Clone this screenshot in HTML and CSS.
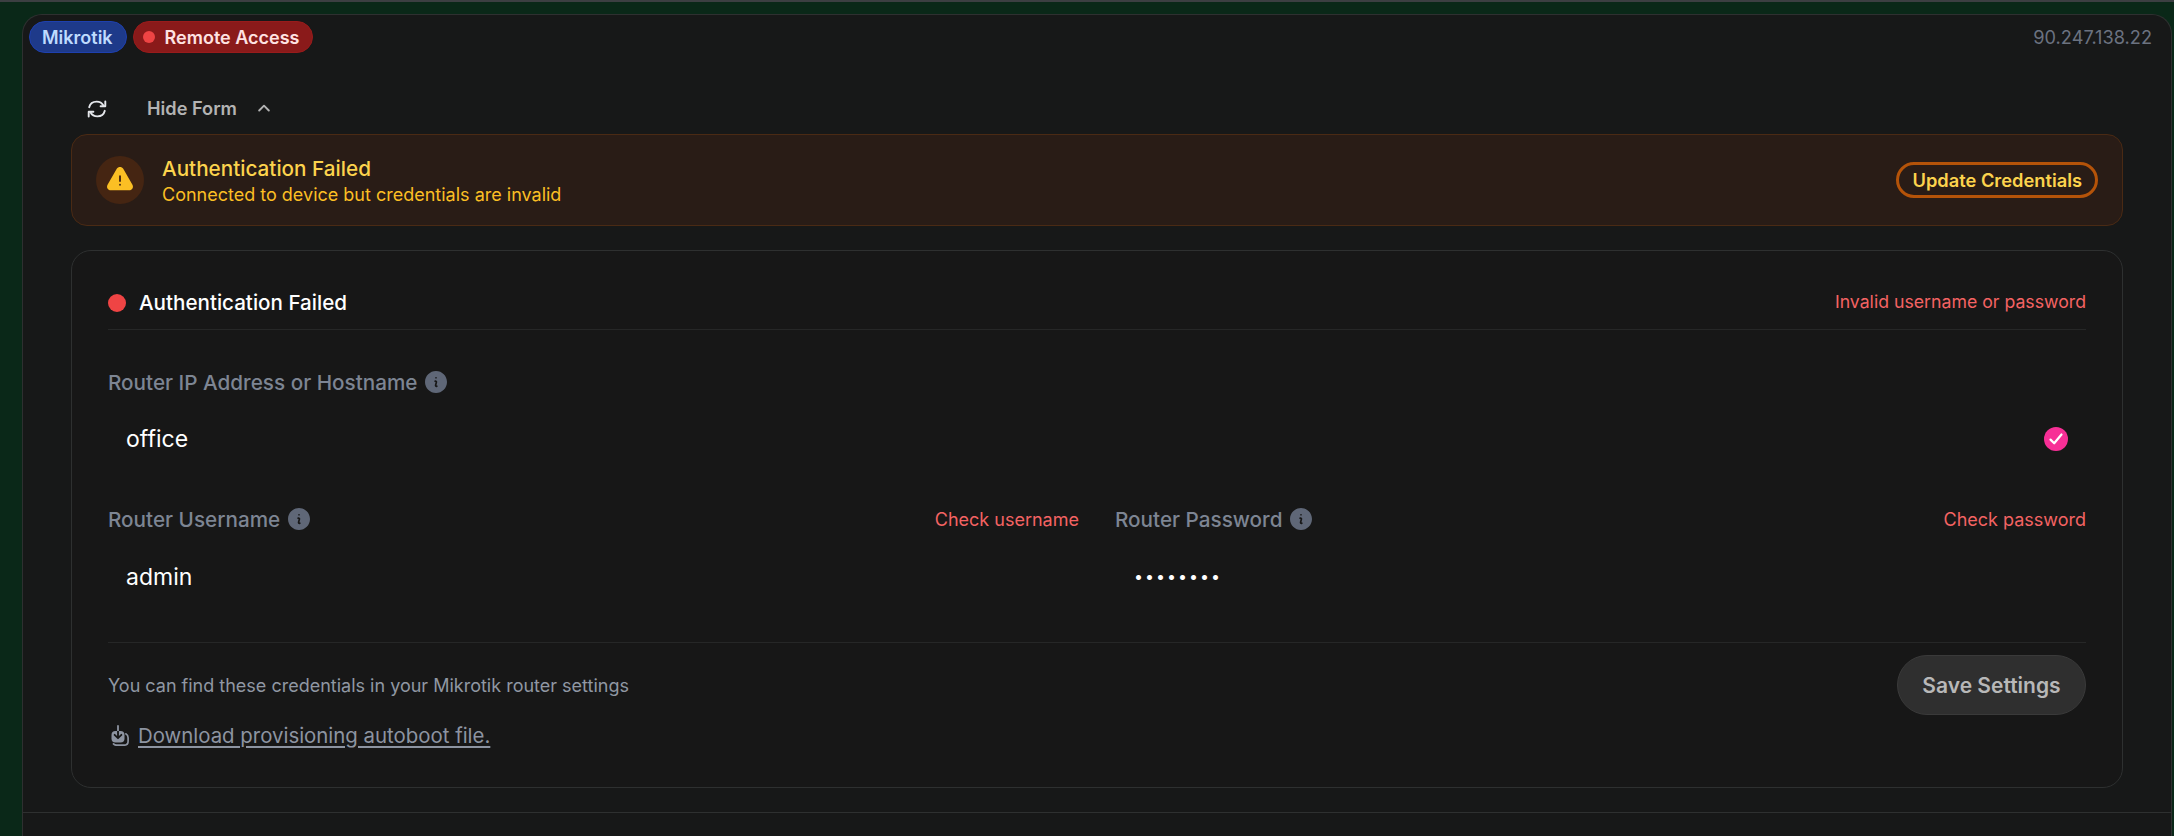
FILE: index.html
```html
<!DOCTYPE html>
<html lang="en">
<head>
<meta charset="utf-8">
<title>Mikrotik</title>
<link rel="stylesheet" href="styles.css">
</head>
<body>
<div class="page">
  <main class="panel">
    <section class="section">
      <header class="panel-head">
        <div class="badges">
          <span class="badge badge-blue">Mikrotik</span>
          <span class="badge badge-red"><i class="badge-dot"></i>Remote Access</span>
        </div>
        <span class="ip">90.247.138.22</span>
      </header>
      <div class="content">
        <div class="toolbar">
          <svg class="refresh" viewBox="0 0 20 18" fill="none" stroke="currentColor" stroke-width="1.9" stroke-linecap="round" stroke-linejoin="round"><path d="M2.2 7.2C3 4 6 1.6 9.6 1.6c3 0 5.500 1.500 6.800 3.900"/><path d="M17.800 10.800C17 14 14 16.400 10.400 16.400c-3 0-5.500-1.500-6.800-3.900"/><path d="M18.300 1.500v4.700h-4.700" /><path d="M1.700 16.500v-4.700h4.700"/></svg>
          <span class="toggle">Hide Form</span>
          <svg class="chevron" viewBox="0 0 12 8" fill="none" stroke="currentColor" stroke-width="1.900" stroke-linecap="round" stroke-linejoin="round"><path d="M1.200 6.500 6 1.700l4.800 4.800"/></svg>
        </div>

        <div class="alert">
          <div class="alert-icon">
            <svg viewBox="0 0 24 24" fill="currentColor"><path fill-rule="evenodd" clip-rule="evenodd" d="M9.401 3.003c1.155-2 4.043-2 5.197 0l7.355 12.748c1.154 2-.29 4.5-2.599 4.5H4.645c-2.309 0-3.752-2.5-2.598-4.5L9.4 3.003zM12 8.250a.75.75 0 01.75.75v3.750a.75.75 0 01-1.500 0V9A.75.75 0 0112 8.250zm0 8.250a.75.75 0 100-1.500.75.75 0 000 1.500z"/></svg>
          </div>
          <div class="alert-text">
            <div class="alert-title">Authentication Failed</div>
            <div class="alert-sub">Connected to device but credentials are invalid</div>
          </div>
          <button class="alert-btn">Update Credentials</button>
        </div>

        <div class="card">
          <div class="card-head">
            <div class="status"><i class="status-dot"></i><span>Authentication Failed</span></div>
            <span class="err err-head">Invalid username or password</span>
          </div>

          <div class="label-row first">
            <label class="label">Router IP Address or Hostname
              <svg class="info" viewBox="2.250 2.250 19.500 19.500" fill="currentColor"><path fill-rule="evenodd" clip-rule="evenodd" d="M2.250 12c0-5.385 4.365-9.750 9.750-9.750s9.750 4.365 9.750 9.750-4.365 9.750-9.750 9.750S2.250 17.385 2.250 12zm8.706-1.442c1.146-.573 2.437.463 2.126 1.706l-.709 2.836.042-.02a.75.75 0 01.67 1.34l-.04.022c-1.147.573-2.438-.463-2.127-1.706l.71-2.836-.042.02a.75.75 0 11-.671-1.34l.041-.022zM12 9a.75.75 0 100-1.500.75.75 0 000 1.500z"/></svg>
            </label>
          </div>
          <div class="value-row">
            <span class="value">office</span>
            <svg class="check" viewBox="0 0 24 24"><circle cx="12" cy="12" r="12" fill="#f72f96"/><path d="M6.500 12.600l3.700 3.700 7.300-8.800" fill="none" stroke="#fff" stroke-width="2.200" stroke-linecap="round" stroke-linejoin="round"/></svg>
          </div>

          <div class="columns">
            <div class="column">
              <div class="label-row">
                <label class="label">Router Username
                  <svg class="info" viewBox="2.250 2.250 19.500 19.500" fill="currentColor"><path fill-rule="evenodd" clip-rule="evenodd" d="M2.250 12c0-5.385 4.365-9.750 9.750-9.750s9.750 4.365 9.750 9.750-4.365 9.750-9.750 9.750S2.250 17.385 2.250 12zm8.706-1.442c1.146-.573 2.437.463 2.126 1.706l-.709 2.836.042-.02a.75.75 0 01.67 1.34l-.04.022c-1.147.573-2.438-.463-2.127-1.706l.71-2.836-.042.02a.75.75 0 11-.671-1.34l.041-.022zM12 9a.75.75 0 100-1.500.75.75 0 000 1.500z"/></svg>
                </label>
                <span class="err">Check username</span>
              </div>
              <div class="value-row second"><span class="value">admin</span></div>
            </div>
            <div class="column">
              <div class="label-row">
                <label class="label">Router Password
                  <svg class="info" viewBox="2.250 2.250 19.500 19.500" fill="currentColor"><path fill-rule="evenodd" clip-rule="evenodd" d="M2.250 12c0-5.385 4.365-9.750 9.750-9.750s9.750 4.365 9.750 9.750-4.365 9.750-9.750 9.750S2.250 17.385 2.250 12zm8.706-1.442c1.146-.573 2.437.463 2.126 1.706l-.709 2.836.042-.02a.75.75 0 01.67 1.34l-.04.022c-1.147.573-2.438-.463-2.127-1.706l.71-2.836-.042.02a.75.75 0 11-.671-1.34l.041-.022zM12 9a.75.75 0 100-1.500.75.75 0 000 1.500z"/></svg>
                </label>
                <span class="err">Check password</span>
              </div>
              <div class="value-row second"><span class="value dots">••••••••</span></div>
            </div>
          </div>

          <div class="card-foot">
            <div class="foot-row">
              <span class="hint">You can find these credentials in your Mikrotik router settings</span>
              <button class="save">Save Settings</button>
            </div>
            <div class="download">
              <svg class="dl-icon" viewBox="0 0 19 21" fill="none"><path d="M15.800 8.800c1.500.8 2.300 2.100 2.300 3.900v3.500c0 2.700-2 4-4.200 4H6.500c-1.300 0-2.300-.5-3-1.300" stroke="currentColor" stroke-width="1.700" stroke-linecap="round"/><rect x="1.500" y="6" width="13" height="11.500" rx="4" fill="currentColor"/><path d="M8 1v5" stroke="currentColor" stroke-width="1.800" stroke-linecap="round"/><path d="M8 6v7" stroke="#171717" stroke-width="1.800"/><path d="M4.600 9.800 8 13.200l3.400-3.400" stroke="#171717" stroke-width="1.800" stroke-linecap="round" stroke-linejoin="round"/></svg>
              <a class="dl-link" href="#">Download provisioning autoboot file.</a>
            </div>
          </div>
        </div>
      </div>
    </section>
  </main>
</div>
</body>
</html>
```

FILE: styles.css
```css
* { box-sizing: border-box; }
html, body { margin: 0; padding: 0; height: 100%; }
body { background: #0a2818; font-family: Inter, "Liberation Sans", sans-serif; overflow: hidden; }
.page { height: 836px; overflow: hidden; border-top: 2px solid #3c3f42; padding: 12px 2px 0 22px; }
.panel { height: 900px; background: #171818; border: 1px solid #2e3030; border-bottom: 0; border-radius: 20px 20px 0 0; }
.section { border-bottom: 1px solid #2e3030; padding-bottom: 24px; }

.panel-head { display: flex; justify-content: space-between; align-items: center; padding: 6px 19px 0 6px; height: 38px; }
.badges { display: flex; gap: 6px; }
.badge { display: inline-flex; align-items: center; height: 32px; border-radius: 16px; font-size: 18px; font-weight: 600; padding: 0 13px 0 12px; border: 1px solid transparent; }
.badge-blue { background: #1e3a8a; border-color: #1e40af; color: #bfdbfe; }
.badge-red { background: #8a1a1a; border-color: #991b1b; color: #fee2e2; padding: 0 12px 0 9px; }
.badge-dot { width: 12px; height: 12px; border-radius: 50%; background: #ef4444; margin-right: 10px; }
.ip { font-size: 18.2px; color: #6b7280; }

.content { padding: 0 48px; }
.toolbar { display: flex; align-items: center; height: 32px; margin-top: 40px; padding-left: 16px; color: #b3b3b3; }
.refresh { width: 20px; height: 18px; color: #e5e7eb; }
.toggle { margin: 0 0 2px 40px; font-size: 18.2px; font-weight: 600; }
.chevron { width: 12px; height: 8px; margin: 0 0 2px 21px; }

.alert { display: flex; align-items: center; height: 92px; margin-top: 9px; padding: 0 24px; gap: 18px; background: #291c16; border: 1px solid #4a2a14; border-radius: 16px; }
.alert-icon { width: 48px; height: 48px; border-radius: 50%; background: #452512; color: #fbbf24; display: flex; align-items: center; justify-content: center; }
.alert-icon svg { width: 30px; height: 30px; }
.alert-text { flex: 1; padding-top: 1px; }
.alert-title { font-size: 20.7px; font-weight: 500; line-height: 28px; color: #fcd34d; }
.alert-sub { font-size: 18px; line-height: 23px; color: #fbbf24; }
.alert-btn { height: 36px; padding: 0 13px; background: transparent; border: 3px solid #b45309; border-radius: 18px; color: #fcd34d; font: 600 18.3px Inter, "Liberation Sans", sans-serif; }

.card { margin-top: 24px; height: 538px; padding: 36px 36px 0; background: #171717; border: 1px solid #2e3030; border-radius: 20px; }
.card-head { display: flex; justify-content: space-between; align-items: center; height: 43px; padding: 1px 0 12px; border-bottom: 1px solid #262727; }
.status { display: flex; align-items: center; gap: 13px; font-size: 20.6px; font-weight: 500; color: #fff; }
.status-dot { width: 18px; height: 18px; border-radius: 50%; background: #ef4444; }
.err { font-size: 18px; color: #f46363; }
.err-head { font-size: 17.7px; margin-bottom: 2px; }

.label-row { display: flex; justify-content: space-between; align-items: center; height: 24px; }
.label-row.first { margin-top: 40px; }
.label { display: flex; align-items: center; gap: 8px; font-size: 20.7px; font-weight: 500; color: #7d8593; }
.info { width: 22px; height: 22px; color: #5f6777; }
.value-row { display: flex; align-items: center; justify-content: space-between; height: 44px; margin-top: 23px; padding: 0 18px; }
.value-row.second { margin-top: 24px; }
.value { font-size: 23px; color: #fff; }
.dots { font-size: 16px; letter-spacing: 2px; padding-left: 1px; margin-bottom: 2px; }
.check { width: 24px; height: 24px; }

.columns { display: grid; grid-template-columns: 1fr 1fr; gap: 36px; margin-top: 46px; }

.card-foot { margin-top: 43px; padding-top: 12px; border-top: 1px solid #262727; }
.foot-row { display: flex; justify-content: space-between; align-items: center; }
.hint { font-size: 18px; color: #9097a3; }
.save { height: 60px; width: 189px; background: #2f2f2f; border: 1px solid #3a3a3a; border-radius: 30px; color: #b8b8b8; font: 600 21px Inter, "Liberation Sans", sans-serif; }
.download { display: flex; align-items: center; gap: 9px; height: 24px; margin-top: 8px; color: #8d94a1; padding-left: 2px; }
.dl-icon { width: 19px; height: 21px; }
.dl-link { font-size: 20.4px; color: #8d94a1; text-underline-offset: 3px; }
```
